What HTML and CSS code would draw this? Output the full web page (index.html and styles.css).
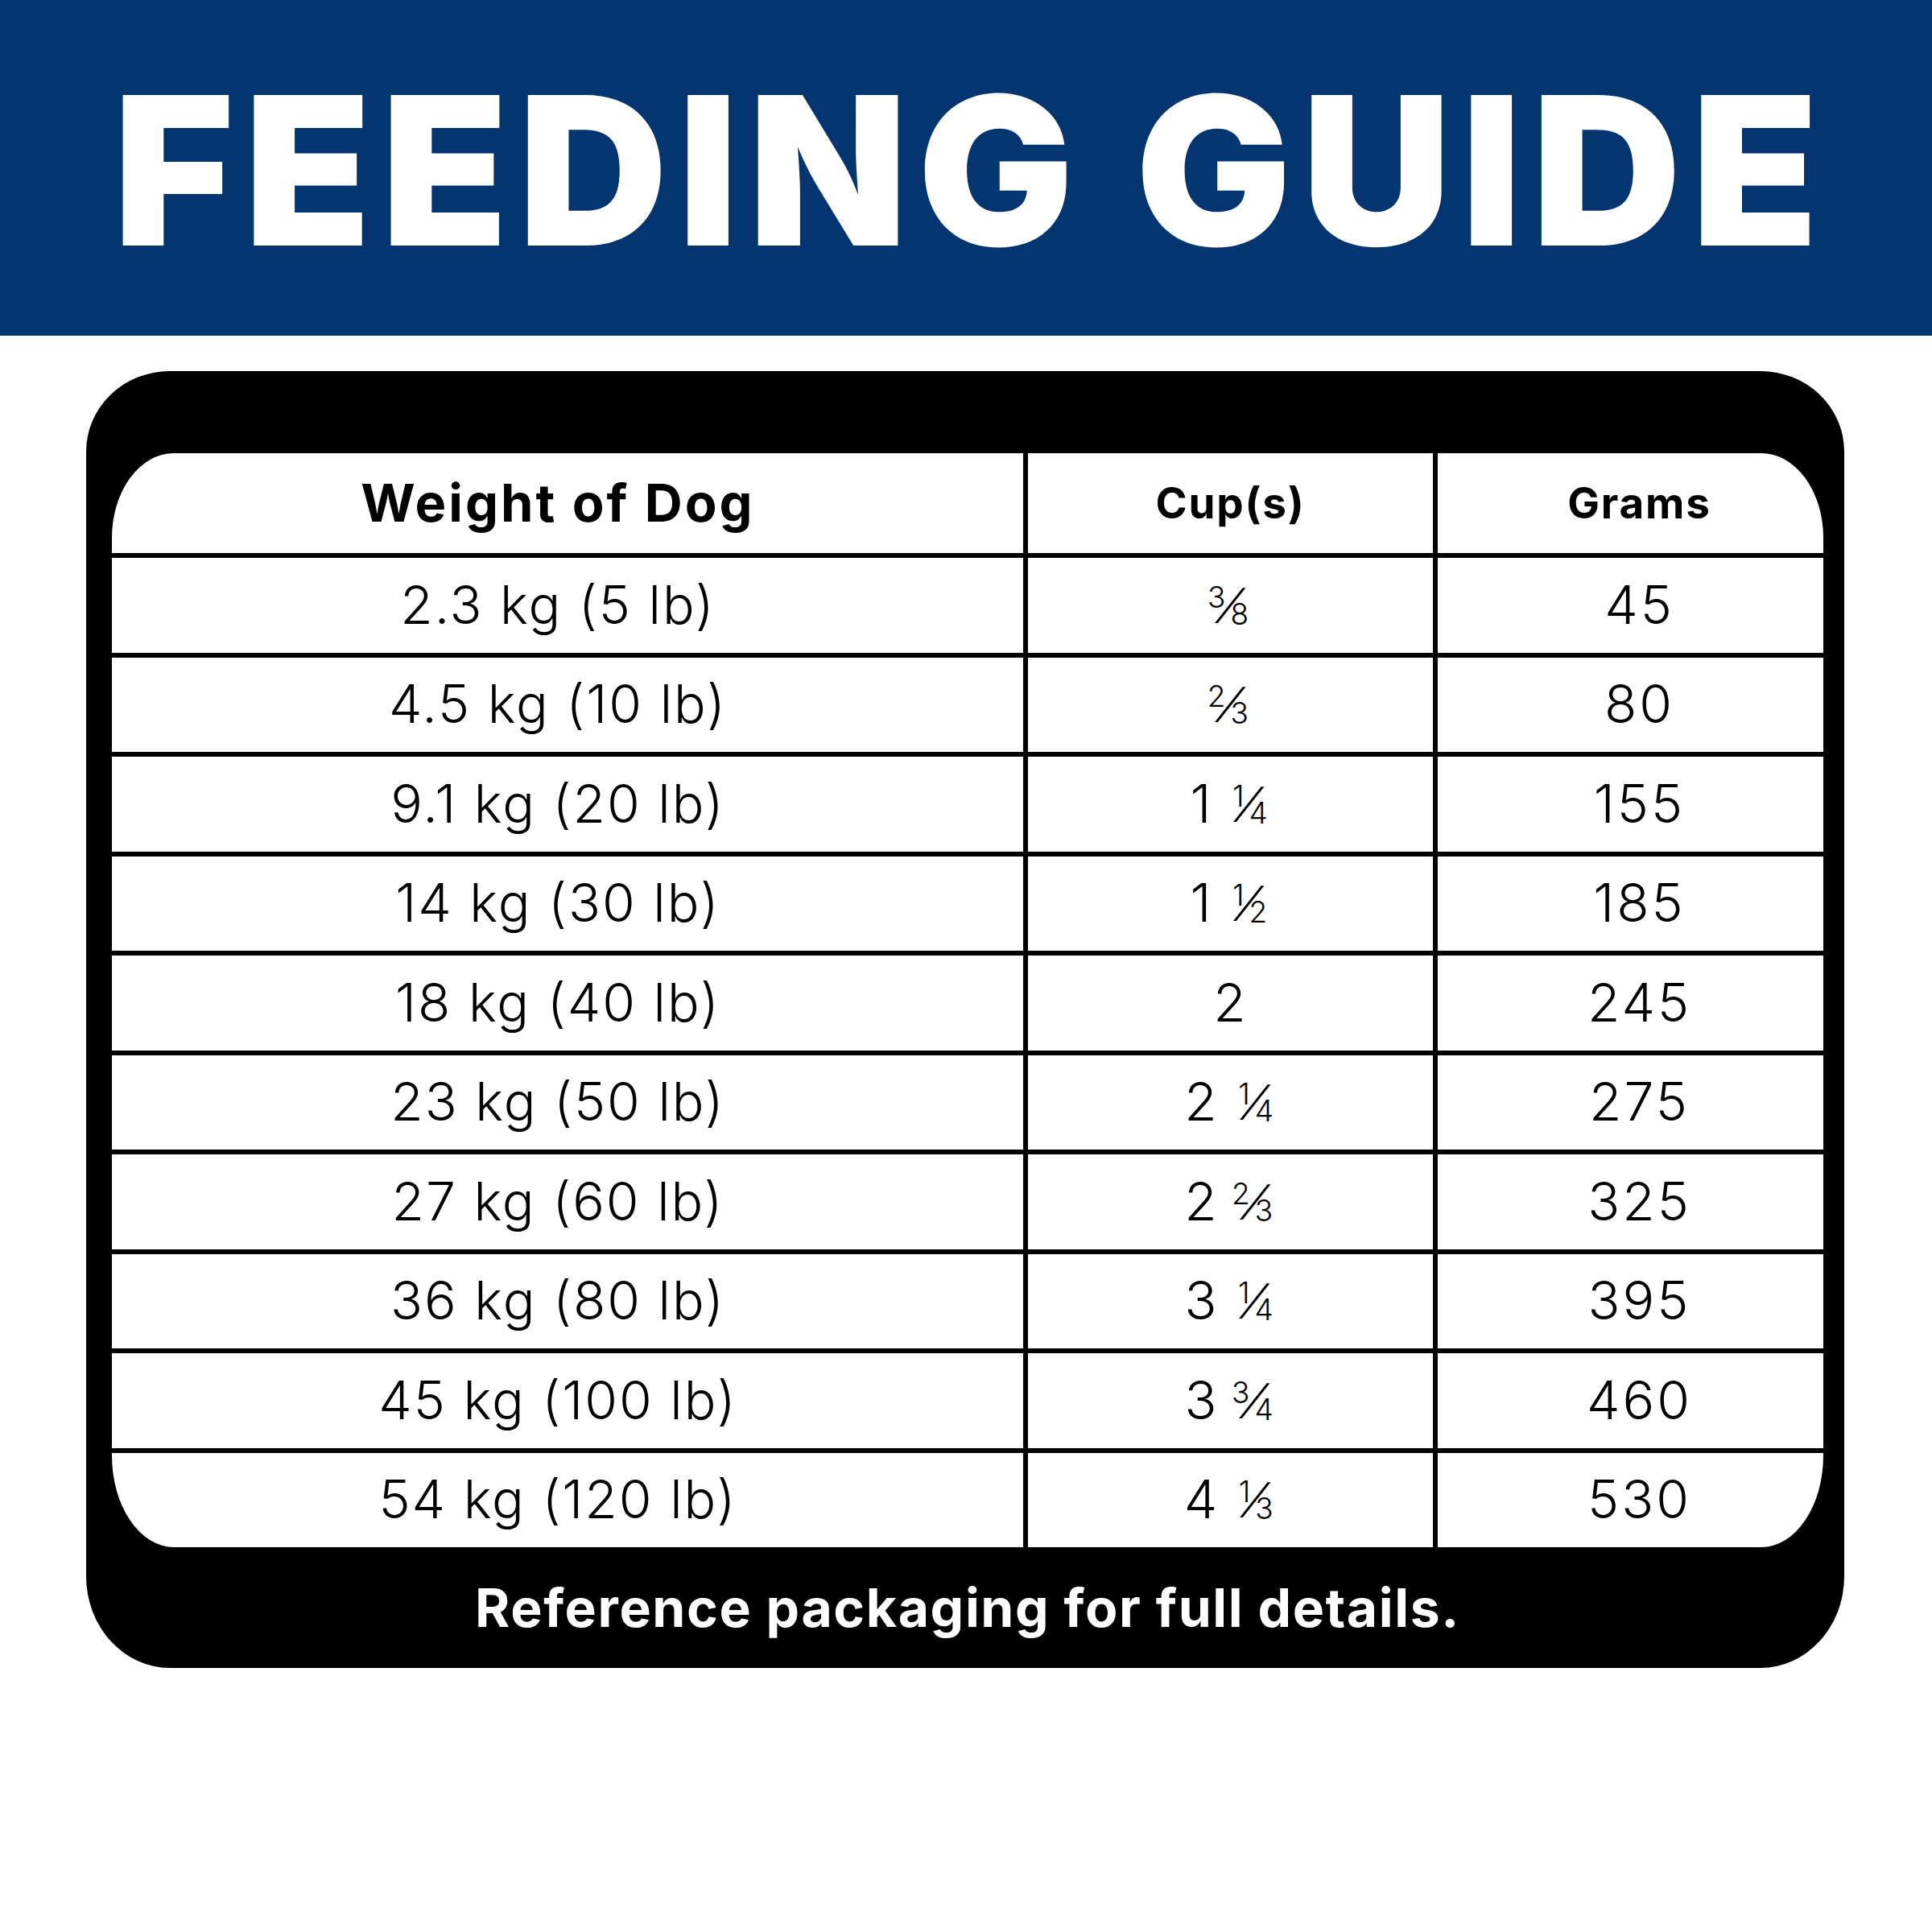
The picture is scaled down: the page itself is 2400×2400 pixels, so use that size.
FILE: index.html
```html
<!DOCTYPE html>
<html lang="en">
<head>
<meta charset="utf-8">
<title>Feeding Guide</title>
<link rel="stylesheet" href="styles.css">
</head>
<body>
<header class="banner">
  <h1 class="title">FEEDING GUIDE</h1>
</header>
<section class="card">
  <div class="grid" role="table" aria-label="Feeding guide">
    <div class="cell head c1" role="columnheader">Weight of Dog</div>
    <div class="cell head small c2" role="columnheader">Cup(s)</div>
    <div class="cell head small c3" role="columnheader">Grams</div>

    <div class="cell c1">2.3 kg (5 lb)</div>
    <div class="cell c2"><span class="frac solo"><span class="n">3</span><span class="s">⁄</span><span class="d">8</span></span></div>
    <div class="cell c3">45</div>

    <div class="cell c1">4.5 kg (10 lb)</div>
    <div class="cell c2"><span class="frac solo"><span class="n">2</span><span class="s">⁄</span><span class="d">3</span></span></div>
    <div class="cell c3">80</div>

    <div class="cell c1">9.1 kg (20 lb)</div>
    <div class="cell c2"><span class="whole">1</span><span class="frac"><span class="n">1</span><span class="s">⁄</span><span class="d">4</span></span></div>
    <div class="cell c3">155</div>

    <div class="cell c1">14 kg (30 lb)</div>
    <div class="cell c2"><span class="whole">1</span><span class="frac"><span class="n">1</span><span class="s">⁄</span><span class="d">2</span></span></div>
    <div class="cell c3">185</div>

    <div class="cell c1">18 kg (40 lb)</div>
    <div class="cell c2">2</div>
    <div class="cell c3">245</div>

    <div class="cell c1">23 kg (50 lb)</div>
    <div class="cell c2"><span class="whole">2</span><span class="frac"><span class="n">1</span><span class="s">⁄</span><span class="d">4</span></span></div>
    <div class="cell c3">275</div>

    <div class="cell c1">27 kg (60 lb)</div>
    <div class="cell c2"><span class="whole">2</span><span class="frac"><span class="n">2</span><span class="s">⁄</span><span class="d">3</span></span></div>
    <div class="cell c3">325</div>

    <div class="cell c1">36 kg (80 lb)</div>
    <div class="cell c2"><span class="whole">3</span><span class="frac"><span class="n">1</span><span class="s">⁄</span><span class="d">4</span></span></div>
    <div class="cell c3">395</div>

    <div class="cell c1">45 kg (100 lb)</div>
    <div class="cell c2"><span class="whole">3</span><span class="frac"><span class="n">3</span><span class="s">⁄</span><span class="d">4</span></span></div>
    <div class="cell c3">460</div>

    <div class="cell c1">54 kg (120 lb)</div>
    <div class="cell c2"><span class="whole">4</span><span class="frac"><span class="n">1</span><span class="s">⁄</span><span class="d">3</span></span></div>
    <div class="cell c3">530</div>
  </div>
  <p class="note">Reference packaging for full details.</p>
</section>
</body>
</html>
```

FILE: styles.css
```css
html, body {
  margin: 0;
  padding: 0;
  background: #ffffff;
}

body {
  width: 2400px;
  font-family: Inter, "Noto Sans", "DejaVu Sans", sans-serif;
  color: #000;
}

.banner {
  height: 417px;
  background: #033670;
  display: flex;
  align-items: center;
  justify-content: center;
}

.title {
  margin: 0;
  color: #fff;
  font-family: Inter, "Noto Sans", sans-serif;
  font-weight: 900;
  font-size: 257px;
  line-height: 1;
  letter-spacing: 12.7px;
  padding: 6px 0 0 12px;
}

.card {
  margin: 44px 0 0 107px;
  width: 2184px;
  background: #000;
  border-radius: 104px 104px 104px 104px / 100px 100px 114px 114px;
  padding: 102px 26px 0 32px;
  box-sizing: border-box;
}

.grid {
  display: grid;
  grid-template-columns: 1132px 503px 481px;
  grid-template-rows: 124px repeat(10, 117.5px);
  gap: 6px;
  background: #000;
  border-radius: 77px 77px 77px 77px / 105px 105px 114px 114px;
  overflow: hidden;
}

.cell {
  background: #fff;
  display: flex;
  align-items: center;
  justify-content: center;
  font-size: 66px;
  line-height: 1.21;
  font-weight: 300;
  letter-spacing: 2px;
  white-space: nowrap;
}

.c1 {
  padding-right: 24px;
}

.c3 {
  padding-left: 20px;
  letter-spacing: 3px;
}

.head {
  font-weight: 700;
  font-size: 65px;
  letter-spacing: 3px;
}

.head.small {
  font-size: 53px;
  letter-spacing: 1.8px;
}

.whole {
  letter-spacing: 0;
}

.frac {
  display: inline-grid;
  grid-template-columns: 21px 33px;
  grid-template-rows: 48px;
  margin-left: 20px;
  letter-spacing: 0;
}

.frac.solo {
  margin-left: 0;
}

.frac .n,
.frac .d {
  grid-row: 1;
  font-size: 37px;
  line-height: 27px;
}

.frac .n {
  grid-column: 1;
  justify-self: end;
  align-self: start;
}

.frac .d {
  grid-column: 2;
  justify-self: start;
  align-self: end;
  margin-left: 6px;
}

.frac .s {
  grid-row: 1;
  grid-column: 1 / 3;
  justify-self: center;
  align-self: center;
  font-size: 60px;
  line-height: 48px;
  font-weight: 300;
  transform: skewX(-6deg);
}

.note {
  margin: 0;
  height: 150px;
  display: flex;
  align-items: center;
  justify-content: center;
  color: #fff;
  font-weight: 700;
  font-size: 66px;
  letter-spacing: 1.6px;
}
```
